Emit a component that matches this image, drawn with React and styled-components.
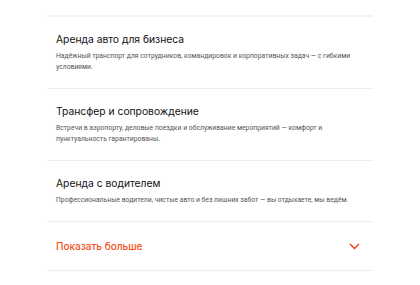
import React from 'react'
import styled, { createGlobalStyle } from 'styled-components'

const GlobalStyle = createGlobalStyle`
  body {
    margin: 0;
    background: #ffffff;
    font-family: 'Inter', 'Noto Sans', sans-serif;
  }
`

const Page = styled.div`
  width: 420px;
  height: 285px;
  padding-top: 15px;
  box-sizing: border-box;
  display: flex;
  justify-content: center;
`

const List = styled.div`
  width: 326px;
  display: flex;
  flex-direction: column;
  border-top: 2px solid #f3f3f3;
`

const Item = styled.div`
  padding: 15px 9px;
  border-bottom: 1px solid #eeeeee;
  display: flex;
  flex-direction: column;
  gap: 5px;
`

const Title = styled.h3`
  margin: 0;
  font-size: 10.3px;
  line-height: 14px;
  font-weight: 400;
  color: #111111;
`

const Text = styled.p`
  margin: 0;
  font-family: 'Roboto', sans-serif;
  font-size: 6.8px;
  line-height: 11px;
  color: #555555;
`

const More = styled.button`
  all: unset;
  box-sizing: border-box;
  padding: 16px 13px 16px 9px;
  border-bottom: 1px solid #eeeeee;
  display: flex;
  align-items: center;
  justify-content: space-between;
  cursor: pointer;
`

const MoreLabel = styled.span`
  font-size: 10px;
  line-height: 16px;
  font-weight: 500;
  color: #f5501e;
`

const services = [
  {
    title: 'Аренда авто для бизнеса',
    text: 'Надёжный транспорт для сотрудников, командировок и корпоративных задач — с гибкими условиями.',
  },
  {
    title: 'Трансфер и сопровождение',
    text: 'Встречи в аэропорту, деловые поездки и обслуживание мероприятий — комфорт и пунктуальность гарантированы.',
  },
  {
    title: 'Аренда с водителем',
    text: 'Профессиональные водители, чистые авто и без лишних забот — вы отдыхаете, мы ведём.',
  },
]

const Chevron = () => (
  <svg width="11" height="7" viewBox="0 0 11 7" fill="none">
    <path d="M1 1l4.5 4.5L10 1" stroke="#f03c14" strokeWidth="1.4" />
  </svg>
)

export default function App() {
  return (
    <>
      <GlobalStyle />
      <Page>
        <List>
          {services.map((s) => (
            <Item key={s.title}>
              <Title>{s.title}</Title>
              <Text>{s.text}</Text>
            </Item>
          ))}
          <More>
            <MoreLabel>Показать больше</MoreLabel>
            <Chevron />
          </More>
        </List>
      </Page>
    </>
  )
}
